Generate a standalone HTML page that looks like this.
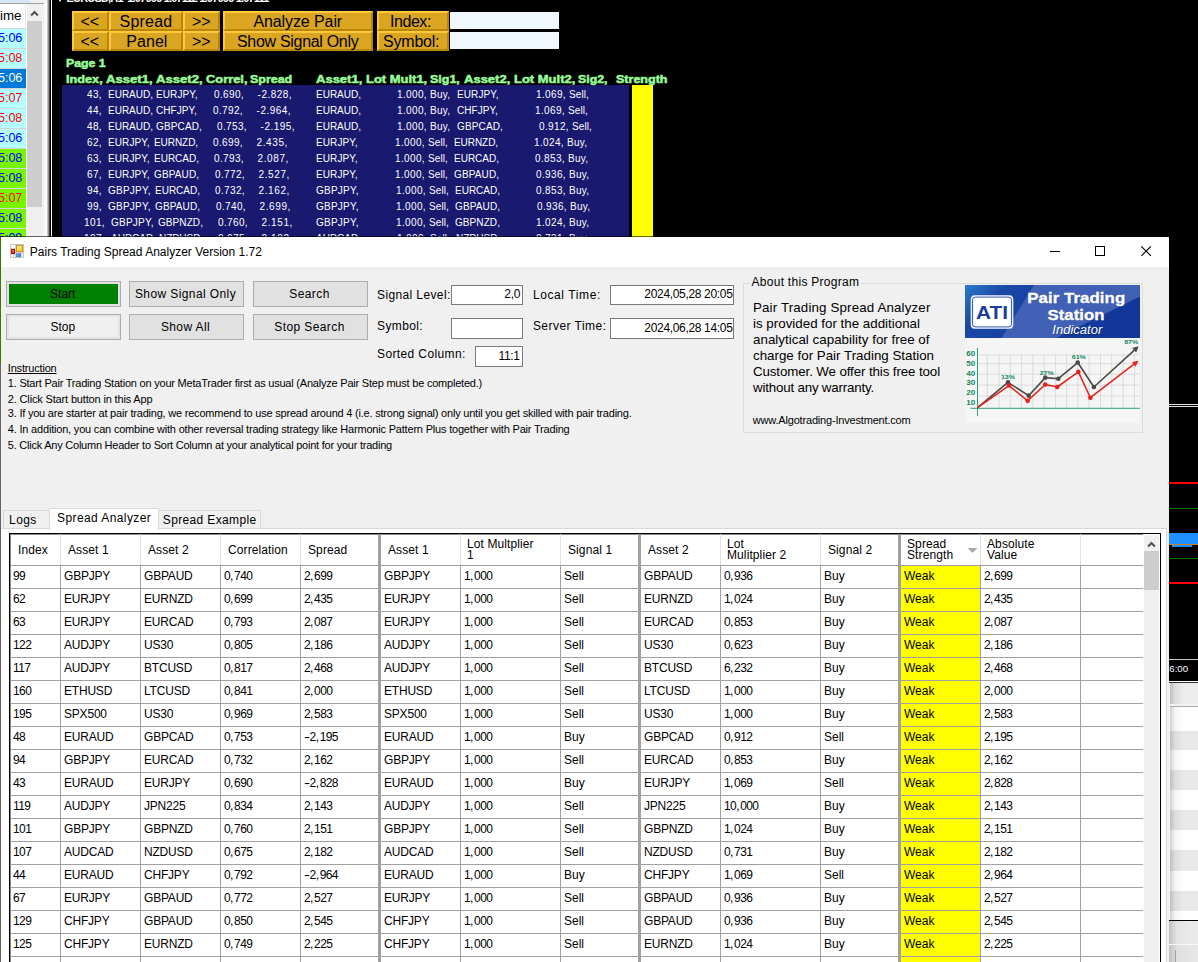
<!DOCTYPE html><html><head><meta charset="utf-8"><title>Pairs Trading Spread Analyzer</title><style>
*{margin:0;padding:0;box-sizing:border-box}
html,body{width:1198px;height:962px;overflow:hidden;background:#000}
body{position:relative;font-family:"Liberation Sans",sans-serif;font-size:12px;color:#000}
div{position:absolute}
.t{white-space:pre}
.a10{font-size:10px;color:#fff}
.hd{font-size:10px;font-weight:bold;color:#98fb98;-webkit-text-stroke:0.45px #98fb98;letter-spacing:0.55px}
.gb{background:#daa520;border-top:2px solid #ffc83d;border-left:2px solid #ffc83d;border-bottom:2px solid #b8860b;border-right:2px solid #b8860b}
.tm{font-size:13.33px}
.wb{background:#e1e1e1;border:1px solid #adadad;text-align:center;line-height:24px;font-size:12px;letter-spacing:0.4px;padding-right:2px}
.g{letter-spacing:0.38px;transform:scaleY(1.06);transform-origin:0 70%}
.sy{transform:scaleY(1.06);transform-origin:0 70%}
.num{letter-spacing:-0.6px}
.cm{padding-right:1.3px}
.mn{display:inline-block;transform:scaleX(1.5);transform-origin:0 50%;margin-right:2.2px}
.wb span{display:block;transform:scaleY(1.06);transform-origin:50% 62%}
.cap{letter-spacing:-0.2px}
.in{background:#fff;border:1px solid #7a7a7a;text-align:right;font-size:12px;letter-spacing:-0.33px}
.ins{font-size:11px}
.ab{font-size:13.33px}
.th{font-size:12px;letter-spacing:0.1px;transform:scaleY(1.06);transform-origin:0 70%}
.td{font-size:12px;transform:scaleY(1.06);transform-origin:0 70%}
</style></head><body>
<div id="left" style="left:0;top:0;width:52px;height:240px;overflow:hidden">
<div style="left:0px;top:0px;width:30px;height:3px;background:#d5e5f5"></div>
<div style="left:30px;top:0px;width:17px;height:3px;background:#f0f0f0"></div>
<div style="left:0px;top:3px;width:44px;height:1px;background:#a0a0a0"></div>
<div style="left:0px;top:4px;width:27px;height:24px;background:#fff"></div>
<div style="left:25px;top:4px;width:1px;height:24px;background:#e8e8e8"></div>
<div class="t tm" style="left:0px;top:8.0px;line-height:16px;">ime</div>
<div style="left:0px;top:28px;width:26px;height:20px;background:#b4ffff;border-top:1px solid #d4d4d4;overflow:hidden"><div class="t" style="right:4.3px;top:0px;line-height:18px;font-size:12.6px;color:#0000ff;letter-spacing:-0.45px">5<span style="margin:0 0.5px 0 0.4px">:</span>06</div></div>
<div style="left:0px;top:48px;width:26px;height:20px;background:#b4ffff;border-top:1px solid #d4d4d4;overflow:hidden"><div class="t" style="right:4.3px;top:0px;line-height:18px;font-size:12.6px;color:#ff0000;letter-spacing:-0.45px">5<span style="margin:0 0.5px 0 0.4px">:</span>08</div></div>
<div style="left:0px;top:68px;width:26px;height:20px;background:#0078d7;border-top:1px solid #d4d4d4;overflow:hidden"><div class="t" style="right:4.3px;top:0px;line-height:18px;font-size:12.6px;color:#ffffff;letter-spacing:-0.45px">5<span style="margin:0 0.5px 0 0.4px">:</span>06</div></div>
<div style="left:0px;top:88px;width:26px;height:20px;background:#b4ffff;border-top:1px solid #d4d4d4;overflow:hidden"><div class="t" style="right:4.3px;top:0px;line-height:18px;font-size:12.6px;color:#ff0000;letter-spacing:-0.45px">5<span style="margin:0 0.5px 0 0.4px">:</span>07</div></div>
<div style="left:0px;top:108px;width:26px;height:20px;background:#b4ffff;border-top:1px solid #d4d4d4;overflow:hidden"><div class="t" style="right:4.3px;top:0px;line-height:18px;font-size:12.6px;color:#ff0000;letter-spacing:-0.45px">5<span style="margin:0 0.5px 0 0.4px">:</span>08</div></div>
<div style="left:0px;top:128px;width:26px;height:20px;background:#b4ffff;border-top:1px solid #d4d4d4;overflow:hidden"><div class="t" style="right:4.3px;top:0px;line-height:18px;font-size:12.6px;color:#0000ff;letter-spacing:-0.45px">5<span style="margin:0 0.5px 0 0.4px">:</span>06</div></div>
<div style="left:0px;top:148px;width:26px;height:20px;background:#78f400;border-top:1px solid #d4d4d4;overflow:hidden"><div class="t" style="right:4.3px;top:0px;line-height:18px;font-size:12.6px;color:#0000ff;letter-spacing:-0.45px">5<span style="margin:0 0.5px 0 0.4px">:</span>08</div></div>
<div style="left:0px;top:168px;width:26px;height:20px;background:#78f400;border-top:1px solid #d4d4d4;overflow:hidden"><div class="t" style="right:4.3px;top:0px;line-height:18px;font-size:12.6px;color:#0000ff;letter-spacing:-0.45px">5<span style="margin:0 0.5px 0 0.4px">:</span>08</div></div>
<div style="left:0px;top:188px;width:26px;height:20px;background:#78f400;border-top:1px solid #d4d4d4;overflow:hidden"><div class="t" style="right:4.3px;top:0px;line-height:18px;font-size:12.6px;color:#ff0000;letter-spacing:-0.45px">5<span style="margin:0 0.5px 0 0.4px">:</span>07</div></div>
<div style="left:0px;top:208px;width:26px;height:20px;background:#78f400;border-top:1px solid #d4d4d4;overflow:hidden"><div class="t" style="right:4.3px;top:0px;line-height:18px;font-size:12.6px;color:#0000ff;letter-spacing:-0.45px">5<span style="margin:0 0.5px 0 0.4px">:</span>08</div></div>
<div style="left:0px;top:228px;width:26px;height:20px;background:#78f400;border-top:1px solid #d4d4d4;overflow:hidden"><div class="t" style="right:4.3px;top:0px;line-height:18px;font-size:12.6px;color:#0000ff;letter-spacing:-0.45px">5<span style="margin:0 0.5px 0 0.4px">:</span>09</div></div>
<div style="left:26px;top:4px;width:1px;height:236px;background:#fff"></div>
<div style="left:27px;top:4px;width:17px;height:236px;background:#f0f0f0"></div>
<svg style="position:absolute;left:30px;top:9px" width="9" height="8" viewBox="0 0 9 8"><path d="M1.1 6.6 L4.5 3.1 L7.9 6.6" fill="none" stroke="#555" stroke-width="2.1"/></svg>
<div style="left:27px;top:21px;width:15px;height:186px;background:#cdcdcd"></div>
<div style="left:44px;top:3px;width:3px;height:237px;background:#fafafa"></div>
<div style="left:47px;top:0px;width:3px;height:240px;background:linear-gradient(90deg,#e0e0e0,#808080 60%,#202020)"></div>
<div style="left:50px;top:0px;width:1px;height:240px;background:#000"></div>
<div style="left:51px;top:0px;width:1px;height:240px;background:#fff"></div>
</div>
<div class="t" style="left:66.50px;top:-8.4px;line-height:12px;font-size:11px;font-weight:bold;color:#fff;letter-spacing:-0.811px;">EURUSD,H1  1.07096 1.07112 1.07096 1.07111</div>
<svg style="position:absolute;left:57px;top:-3.5px" width="6" height="5" viewBox="0 0 6 5"><path d="M0 0 H6 L3 5 Z" fill="#fff"/></svg>
<div class="gb" style="left:72px;top:11px;width:37px;height:20px;"></div>
<div class="t" style="left:80.50px;top:12.899999999999999px;line-height:18px;font-size:16px;letter-spacing:-0.044px;">&lt;&lt;</div>
<div class="gb" style="left:109px;top:11px;width:74px;height:20px;"></div>
<div class="t" style="left:119.60px;top:12.899999999999999px;line-height:18px;font-size:16px;letter-spacing:0.184px;">Spread</div>
<div class="gb" style="left:183px;top:11px;width:37px;height:20px;"></div>
<div class="t" style="left:192.00px;top:12.899999999999999px;line-height:18px;font-size:16px;letter-spacing:-0.144px;">&gt;&gt;</div>
<div class="gb" style="left:72px;top:31px;width:37px;height:20px;"></div>
<div class="t" style="left:80.50px;top:32.9px;line-height:18px;font-size:16px;letter-spacing:-0.044px;">&lt;&lt;</div>
<div class="gb" style="left:109px;top:31px;width:74px;height:20px;"></div>
<div class="t" style="left:126.20px;top:32.9px;line-height:18px;font-size:16px;letter-spacing:0.076px;">Panel</div>
<div class="gb" style="left:183px;top:31px;width:37px;height:20px;"></div>
<div class="t" style="left:192.00px;top:32.9px;line-height:18px;font-size:16px;letter-spacing:-0.144px;">&gt;&gt;</div>
<div class="gb" style="left:223px;top:11px;width:150px;height:20px;"></div>
<div class="t" style="left:253.40px;top:12.899999999999999px;line-height:18px;font-size:16px;letter-spacing:-0.094px;">Analyze Pair</div>
<div class="gb" style="left:223px;top:31px;width:150px;height:20px;"></div>
<div class="t" style="left:237.00px;top:32.9px;line-height:18px;font-size:16px;letter-spacing:-0.306px;">Show Signal Only</div>
<div class="gb" style="left:377px;top:11px;width:72px;height:20px;"></div>
<div class="t" style="left:389.90px;top:12.899999999999999px;line-height:18px;font-size:16px;letter-spacing:-0.416px;">Index:</div>
<div class="gb" style="left:377px;top:31px;width:72px;height:20px;"></div>
<div class="t" style="left:383.10px;top:32.9px;line-height:18px;font-size:16px;letter-spacing:-0.228px;">Symbol:</div>
<div style="left:450px;top:12px;width:109px;height:17px;background:#f0f8ff"></div>
<div style="left:450px;top:32px;width:109px;height:17px;background:#f0f8ff"></div>
<div style="left:62px;top:85px;width:567px;height:155px;background:#191970"></div>
<div style="left:632px;top:85px;width:21px;height:155px;background:#ffff00"></div>
<div class="t" style="left:65.80px;top:56.0px;line-height:14px;font-size:10.67px;font-weight:bold;color:#98fb98;-webkit-text-stroke:0.5px #98fb98;transform-origin:0 50%;transform:scaleX(1.1554);">Page 1</div>
<div class="t" style="left:65.80px;top:71.5px;line-height:14px;font-size:10.67px;font-weight:bold;color:#98fb98;-webkit-text-stroke:0.5px #98fb98;transform-origin:0 50%;transform:scaleX(1.1917);">Index,</div>
<div class="t" style="left:105.80px;top:71.5px;line-height:14px;font-size:10.67px;font-weight:bold;color:#98fb98;-webkit-text-stroke:0.5px #98fb98;transform-origin:0 50%;transform:scaleX(1.2288);">Asset1,</div>
<div class="t" style="left:155.90px;top:71.5px;line-height:14px;font-size:10.67px;font-weight:bold;color:#98fb98;-webkit-text-stroke:0.5px #98fb98;transform-origin:0 50%;transform:scaleX(1.2288);">Asset2,</div>
<div class="t" style="left:205.50px;top:71.5px;line-height:14px;font-size:10.67px;font-weight:bold;color:#98fb98;-webkit-text-stroke:0.5px #98fb98;transform-origin:0 50%;transform:scaleX(1.2078);">Correl,</div>
<div class="t" style="left:250.30px;top:71.5px;line-height:14px;font-size:10.67px;font-weight:bold;color:#98fb98;-webkit-text-stroke:0.5px #98fb98;transform-origin:0 50%;transform:scaleX(1.1677);">Spread</div>
<div class="t" style="left:316.00px;top:71.5px;line-height:14px;font-size:10.67px;font-weight:bold;color:#98fb98;-webkit-text-stroke:0.5px #98fb98;transform-origin:0 50%;transform:scaleX(1.2209);">Asset1,</div>
<div class="t" style="left:365.50px;top:71.5px;line-height:14px;font-size:10.67px;font-weight:bold;color:#98fb98;-webkit-text-stroke:0.5px #98fb98;transform-origin:0 50%;transform:scaleX(1.2164);">Lot Mult1,</div>
<div class="t" style="left:430.20px;top:71.5px;line-height:14px;font-size:10.67px;font-weight:bold;color:#98fb98;-webkit-text-stroke:0.5px #98fb98;transform-origin:0 50%;transform:scaleX(1.1701);">Sig1,</div>
<div class="t" style="left:463.50px;top:71.5px;line-height:14px;font-size:10.67px;font-weight:bold;color:#98fb98;-webkit-text-stroke:0.5px #98fb98;transform-origin:0 50%;transform:scaleX(1.2209);">Asset2,</div>
<div class="t" style="left:513.50px;top:71.5px;line-height:14px;font-size:10.67px;font-weight:bold;color:#98fb98;-webkit-text-stroke:0.5px #98fb98;transform-origin:0 50%;transform:scaleX(1.2184);">Lot Mult2,</div>
<div class="t" style="left:578.00px;top:71.5px;line-height:14px;font-size:10.67px;font-weight:bold;color:#98fb98;-webkit-text-stroke:0.5px #98fb98;transform-origin:0 50%;transform:scaleX(1.1583);">Sig2,</div>
<div class="t" style="left:616.00px;top:71.5px;line-height:14px;font-size:10.67px;font-weight:bold;color:#98fb98;-webkit-text-stroke:0.5px #98fb98;transform-origin:0 50%;transform:scaleX(1.1755);">Strength</div>
<div class="t a10" style="left:87px;top:87.5px;line-height:14px;letter-spacing:0.367px">43,</div>
<div class="t a10" style="left:108px;top:87.5px;line-height:14px;letter-spacing:0.000px">EURAUD,</div>
<div class="t a10" style="left:156px;top:87.5px;line-height:14px;letter-spacing:0.110px">EURJPY,</div>
<div class="t a10" style="left:214px;top:87.5px;line-height:14px;letter-spacing:0.367px">0.690,</div>
<div class="t a10" style="left:257.6px;top:87.5px;line-height:14px;letter-spacing:0.487px">-2.828,</div>
<div class="t a10" style="left:316px;top:87.5px;line-height:14px;letter-spacing:0.000px">EURAUD,</div>
<div class="t a10" style="left:397px;top:87.5px;line-height:14px;letter-spacing:0.367px">1.000,</div>
<div class="t a10" style="left:430px;top:87.5px;line-height:14px;letter-spacing:0.247px">Buy,</div>
<div class="t a10" style="left:457px;top:87.5px;line-height:14px;letter-spacing:0.110px">EURJPY,</div>
<div class="t a10" style="left:536px;top:87.5px;line-height:14px;letter-spacing:0.367px">1.069,</div>
<div class="t a10" style="left:569px;top:87.5px;line-height:14px;letter-spacing:0.110px">Sell,</div>
<div class="t a10" style="left:87px;top:103.5px;line-height:14px;letter-spacing:0.367px">44,</div>
<div class="t a10" style="left:108px;top:103.5px;line-height:14px;letter-spacing:0.000px">EURAUD,</div>
<div class="t a10" style="left:156px;top:103.5px;line-height:14px;letter-spacing:0.047px">CHFJPY,</div>
<div class="t a10" style="left:213px;top:103.5px;line-height:14px;letter-spacing:0.367px">0.792,</div>
<div class="t a10" style="left:256.6px;top:103.5px;line-height:14px;letter-spacing:0.487px">-2.964,</div>
<div class="t a10" style="left:316px;top:103.5px;line-height:14px;letter-spacing:0.000px">EURAUD,</div>
<div class="t a10" style="left:397px;top:103.5px;line-height:14px;letter-spacing:0.367px">1.000,</div>
<div class="t a10" style="left:430px;top:103.5px;line-height:14px;letter-spacing:0.247px">Buy,</div>
<div class="t a10" style="left:457px;top:103.5px;line-height:14px;letter-spacing:0.047px">CHFJPY,</div>
<div class="t a10" style="left:535px;top:103.5px;line-height:14px;letter-spacing:0.367px">1.069,</div>
<div class="t a10" style="left:568px;top:103.5px;line-height:14px;letter-spacing:0.110px">Sell,</div>
<div class="t a10" style="left:87px;top:119.5px;line-height:14px;letter-spacing:0.367px">48,</div>
<div class="t a10" style="left:108px;top:119.5px;line-height:14px;letter-spacing:0.000px">EURAUD,</div>
<div class="t a10" style="left:156px;top:119.5px;line-height:14px;letter-spacing:0.141px">GBPCAD,</div>
<div class="t a10" style="left:217px;top:119.5px;line-height:14px;letter-spacing:0.367px">0.753,</div>
<div class="t a10" style="left:260.6px;top:119.5px;line-height:14px;letter-spacing:0.487px">-2.195,</div>
<div class="t a10" style="left:316px;top:119.5px;line-height:14px;letter-spacing:0.000px">EURAUD,</div>
<div class="t a10" style="left:397px;top:119.5px;line-height:14px;letter-spacing:0.367px">1.000,</div>
<div class="t a10" style="left:430px;top:119.5px;line-height:14px;letter-spacing:0.247px">Buy,</div>
<div class="t a10" style="left:457px;top:119.5px;line-height:14px;letter-spacing:0.141px">GBPCAD,</div>
<div class="t a10" style="left:539px;top:119.5px;line-height:14px;letter-spacing:0.367px">0.912,</div>
<div class="t a10" style="left:572px;top:119.5px;line-height:14px;letter-spacing:0.110px">Sell,</div>
<div class="t a10" style="left:87px;top:135.5px;line-height:14px;letter-spacing:0.367px">62,</div>
<div class="t a10" style="left:108px;top:135.5px;line-height:14px;letter-spacing:0.110px">EURJPY,</div>
<div class="t a10" style="left:154px;top:135.5px;line-height:14px;letter-spacing:-0.063px">EURNZD,</div>
<div class="t a10" style="left:213px;top:135.5px;line-height:14px;letter-spacing:0.367px">0.699,</div>
<div class="t a10" style="left:256.6px;top:135.5px;line-height:14px;letter-spacing:0.587px">2.435,</div>
<div class="t a10" style="left:316px;top:135.5px;line-height:14px;letter-spacing:0.110px">EURJPY,</div>
<div class="t a10" style="left:395px;top:135.5px;line-height:14px;letter-spacing:0.367px">1.000,</div>
<div class="t a10" style="left:428px;top:135.5px;line-height:14px;letter-spacing:0.110px">Sell,</div>
<div class="t a10" style="left:454px;top:135.5px;line-height:14px;letter-spacing:-0.063px">EURNZD,</div>
<div class="t a10" style="left:534px;top:135.5px;line-height:14px;letter-spacing:0.367px">1.024,</div>
<div class="t a10" style="left:567px;top:135.5px;line-height:14px;letter-spacing:0.247px">Buy,</div>
<div class="t a10" style="left:87px;top:151.5px;line-height:14px;letter-spacing:0.367px">63,</div>
<div class="t a10" style="left:108px;top:151.5px;line-height:14px;letter-spacing:0.110px">EURJPY,</div>
<div class="t a10" style="left:154px;top:151.5px;line-height:14px;letter-spacing:0.000px">EURCAD,</div>
<div class="t a10" style="left:214px;top:151.5px;line-height:14px;letter-spacing:0.367px">0.793,</div>
<div class="t a10" style="left:257.6px;top:151.5px;line-height:14px;letter-spacing:0.587px">2.087,</div>
<div class="t a10" style="left:316px;top:151.5px;line-height:14px;letter-spacing:0.110px">EURJPY,</div>
<div class="t a10" style="left:395px;top:151.5px;line-height:14px;letter-spacing:0.367px">1.000,</div>
<div class="t a10" style="left:428px;top:151.5px;line-height:14px;letter-spacing:0.110px">Sell,</div>
<div class="t a10" style="left:454px;top:151.5px;line-height:14px;letter-spacing:0.000px">EURCAD,</div>
<div class="t a10" style="left:535px;top:151.5px;line-height:14px;letter-spacing:0.367px">0.853,</div>
<div class="t a10" style="left:568px;top:151.5px;line-height:14px;letter-spacing:0.247px">Buy,</div>
<div class="t a10" style="left:87px;top:167.5px;line-height:14px;letter-spacing:0.367px">67,</div>
<div class="t a10" style="left:108px;top:167.5px;line-height:14px;letter-spacing:0.110px">EURJPY,</div>
<div class="t a10" style="left:154px;top:167.5px;line-height:14px;letter-spacing:0.141px">GBPAUD,</div>
<div class="t a10" style="left:215px;top:167.5px;line-height:14px;letter-spacing:0.367px">0.772,</div>
<div class="t a10" style="left:258.6px;top:167.5px;line-height:14px;letter-spacing:0.587px">2.527,</div>
<div class="t a10" style="left:316px;top:167.5px;line-height:14px;letter-spacing:0.110px">EURJPY,</div>
<div class="t a10" style="left:395px;top:167.5px;line-height:14px;letter-spacing:0.367px">1.000,</div>
<div class="t a10" style="left:428px;top:167.5px;line-height:14px;letter-spacing:0.110px">Sell,</div>
<div class="t a10" style="left:454px;top:167.5px;line-height:14px;letter-spacing:0.141px">GBPAUD,</div>
<div class="t a10" style="left:536px;top:167.5px;line-height:14px;letter-spacing:0.367px">0.936,</div>
<div class="t a10" style="left:569px;top:167.5px;line-height:14px;letter-spacing:0.247px">Buy,</div>
<div class="t a10" style="left:87px;top:183.5px;line-height:14px;letter-spacing:0.367px">94,</div>
<div class="t a10" style="left:108px;top:183.5px;line-height:14px;letter-spacing:0.251px">GBPJPY,</div>
<div class="t a10" style="left:155px;top:183.5px;line-height:14px;letter-spacing:0.000px">EURCAD,</div>
<div class="t a10" style="left:215px;top:183.5px;line-height:14px;letter-spacing:0.367px">0.732,</div>
<div class="t a10" style="left:258.6px;top:183.5px;line-height:14px;letter-spacing:0.587px">2.162,</div>
<div class="t a10" style="left:316px;top:183.5px;line-height:14px;letter-spacing:0.251px">GBPJPY,</div>
<div class="t a10" style="left:396px;top:183.5px;line-height:14px;letter-spacing:0.367px">1.000,</div>
<div class="t a10" style="left:429px;top:183.5px;line-height:14px;letter-spacing:0.110px">Sell,</div>
<div class="t a10" style="left:455px;top:183.5px;line-height:14px;letter-spacing:0.000px">EURCAD,</div>
<div class="t a10" style="left:536px;top:183.5px;line-height:14px;letter-spacing:0.367px">0.853,</div>
<div class="t a10" style="left:569px;top:183.5px;line-height:14px;letter-spacing:0.247px">Buy,</div>
<div class="t a10" style="left:87px;top:199.5px;line-height:14px;letter-spacing:0.367px">99,</div>
<div class="t a10" style="left:108px;top:199.5px;line-height:14px;letter-spacing:0.251px">GBPJPY,</div>
<div class="t a10" style="left:155px;top:199.5px;line-height:14px;letter-spacing:0.141px">GBPAUD,</div>
<div class="t a10" style="left:216px;top:199.5px;line-height:14px;letter-spacing:0.367px">0.740,</div>
<div class="t a10" style="left:259.6px;top:199.5px;line-height:14px;letter-spacing:0.587px">2.699,</div>
<div class="t a10" style="left:316px;top:199.5px;line-height:14px;letter-spacing:0.251px">GBPJPY,</div>
<div class="t a10" style="left:396px;top:199.5px;line-height:14px;letter-spacing:0.367px">1.000,</div>
<div class="t a10" style="left:429px;top:199.5px;line-height:14px;letter-spacing:0.110px">Sell,</div>
<div class="t a10" style="left:455px;top:199.5px;line-height:14px;letter-spacing:0.141px">GBPAUD,</div>
<div class="t a10" style="left:537px;top:199.5px;line-height:14px;letter-spacing:0.367px">0.936,</div>
<div class="t a10" style="left:570px;top:199.5px;line-height:14px;letter-spacing:0.247px">Buy,</div>
<div class="t a10" style="left:84px;top:215.5px;line-height:14px;letter-spacing:0.385px">101,</div>
<div class="t a10" style="left:111px;top:215.5px;line-height:14px;letter-spacing:0.251px">GBPJPY,</div>
<div class="t a10" style="left:158px;top:215.5px;line-height:14px;letter-spacing:0.079px">GBPNZD,</div>
<div class="t a10" style="left:218px;top:215.5px;line-height:14px;letter-spacing:0.367px">0.760,</div>
<div class="t a10" style="left:261.6px;top:215.5px;line-height:14px;letter-spacing:0.587px">2.151,</div>
<div class="t a10" style="left:316px;top:215.5px;line-height:14px;letter-spacing:0.251px">GBPJPY,</div>
<div class="t a10" style="left:396px;top:215.5px;line-height:14px;letter-spacing:0.367px">1.000,</div>
<div class="t a10" style="left:429px;top:215.5px;line-height:14px;letter-spacing:0.110px">Sell,</div>
<div class="t a10" style="left:455px;top:215.5px;line-height:14px;letter-spacing:0.079px">GBPNZD,</div>
<div class="t a10" style="left:536px;top:215.5px;line-height:14px;letter-spacing:0.367px">1.024,</div>
<div class="t a10" style="left:569px;top:215.5px;line-height:14px;letter-spacing:0.247px">Buy,</div>
<div class="t a10" style="left:84px;top:231.5px;line-height:14px;letter-spacing:0.385px">107,</div>
<div class="t a10" style="left:111px;top:231.5px;line-height:14px;letter-spacing:0.000px">AUDCAD,</div>
<div class="t a10" style="left:159px;top:231.5px;line-height:14px;letter-spacing:-0.063px">NZDUSD,</div>
<div class="t a10" style="left:218px;top:231.5px;line-height:14px;letter-spacing:0.367px">0.675,</div>
<div class="t a10" style="left:261.6px;top:231.5px;line-height:14px;letter-spacing:0.587px">2.182,</div>
<div class="t a10" style="left:316px;top:231.5px;line-height:14px;letter-spacing:0.000px">AUDCAD,</div>
<div class="t a10" style="left:397px;top:231.5px;line-height:14px;letter-spacing:0.367px">1.000,</div>
<div class="t a10" style="left:430px;top:231.5px;line-height:14px;letter-spacing:0.110px">Sell,</div>
<div class="t a10" style="left:456px;top:231.5px;line-height:14px;letter-spacing:-0.063px">NZDUSD,</div>
<div class="t a10" style="left:536px;top:231.5px;line-height:14px;letter-spacing:0.367px">0.731,</div>
<div class="t a10" style="left:569px;top:231.5px;line-height:14px;letter-spacing:0.247px">Buy,</div>
<div style="left:1169px;top:404px;width:29px;height:1px;background:#e0e0e0"></div>
<div style="left:1169px;top:406px;width:29px;height:1px;background:#e0e0e0"></div>
<div style="left:1169px;top:482px;width:29px;height:2px;background:#ff0000"></div>
<div style="left:1169px;top:508px;width:29px;height:1px;background:#007000"></div>
<div style="left:1169px;top:533px;width:29px;height:11px;background:#1e90ff"></div>
<div style="left:1169px;top:544px;width:29px;height:1px;background:#d08020"></div>
<div style="left:1172px;top:545px;width:20px;height:2px;background:#1e90ff"></div>
<div style="left:1169px;top:558px;width:29px;height:1px;background:#007000"></div>
<div style="left:1169px;top:582px;width:29px;height:2px;background:#ff0000"></div>
<div style="left:1169px;top:659px;width:29px;height:1px;background:#c8c8c8"></div>
<div class="t " style="left:1169.3px;top:662.6px;line-height:12px;color:#fff;font-size:9.6px">6:00</div>
<div style="left:1169px;top:681px;width:29px;height:1px;background:#fff"></div>
<div style="left:1169px;top:682px;width:29px;height:1px;background:#303030"></div>
<div style="left:1169px;top:683px;width:29px;height:21px;background:linear-gradient(90deg,#b8b8b8 0,#dcdcdc 6px,#ececec 14px)"></div>
<div style="left:1169px;top:707px;width:29px;height:24px;background:linear-gradient(90deg,#c8c8c8 0,#f4f4f4 6px,#fff 14px)"></div>
<div style="left:1169px;top:731px;width:29px;height:19px;background:linear-gradient(90deg,#b8b8b8 0,#dcdcdc 6px,#e8e8e8 14px)"></div>
<div style="left:1169px;top:750px;width:29px;height:20px;background:linear-gradient(90deg,#c8c8c8 0,#f4f4f4 6px,#fff 14px)"></div>
<div style="left:1169px;top:770px;width:29px;height:20px;background:linear-gradient(90deg,#b8b8b8 0,#dcdcdc 6px,#e8e8e8 14px)"></div>
<div style="left:1169px;top:790px;width:29px;height:20px;background:linear-gradient(90deg,#c8c8c8 0,#f4f4f4 6px,#fff 14px)"></div>
<div style="left:1169px;top:810px;width:29px;height:20px;background:linear-gradient(90deg,#b8b8b8 0,#dcdcdc 6px,#e8e8e8 14px)"></div>
<div style="left:1169px;top:830px;width:29px;height:20px;background:linear-gradient(90deg,#c8c8c8 0,#f4f4f4 6px,#fff 14px)"></div>
<div style="left:1169px;top:850px;width:29px;height:21px;background:linear-gradient(90deg,#b8b8b8 0,#dcdcdc 6px,#e8e8e8 14px)"></div>
<div style="left:1169px;top:871px;width:29px;height:20px;background:linear-gradient(90deg,#c8c8c8 0,#f4f4f4 6px,#fff 14px)"></div>
<div style="left:1169px;top:891px;width:29px;height:20px;background:linear-gradient(90deg,#b8b8b8 0,#dcdcdc 6px,#e8e8e8 14px)"></div>
<div style="left:1169px;top:911px;width:29px;height:9px;background:linear-gradient(90deg,#c8c8c8 0,#f4f4f4 6px,#fff 14px)"></div>
<div style="left:1169px;top:704px;width:29px;height:2px;background:#f2f2f2"></div>
<div style="left:1169px;top:706px;width:29px;height:1px;background:#a8a8a8"></div>
<div style="left:1169px;top:920px;width:29px;height:1px;background:#000"></div>
<div style="left:1169px;top:921px;width:29px;height:23px;background:linear-gradient(90deg,#c0c0c0 0,#e4e4e4 8px,#ececec)"></div>
<div style="left:1169px;top:944px;width:29px;height:1px;background:#f8f8f8"></div>
<div style="left:1169px;top:945px;width:29px;height:17px;background:linear-gradient(90deg,#c0c0c0 0,#e0e0e0 8px,#e8e8e8)"></div>
<div style="left:1175px;top:950px;width:1px;height:12px;background:#a0a0a0"></div>
<div style="left:1169px;top:683px;width:1px;height:237px;background:#f4f4f4"></div>
<div style="left:0px;top:236px;width:1169px;height:1px;background:rgba(0,0,0,0.6)"></div>
<div style="left:0px;top:237px;width:1px;height:127px;background:#3a7800"></div>
<div style="left:0px;top:364px;width:1px;height:598px;background:#646464"></div>
<div id="win" style="left:1px;top:237px;width:1168px;height:725px;background:#f0f0f0"></div>
<div style="left:1px;top:237px;width:1168px;height:30px;background:#fff"></div>
<svg style="position:absolute;left:10px;top:244px" width="14" height="14" viewBox="0 0 14 14">
<defs><linearGradient id="iy" x1="0" y1="0" x2="0.6" y2="1"><stop offset="0" stop-color="#fff4c0"/><stop offset="1" stop-color="#ffc61a"/></linearGradient>
<linearGradient id="ir" x1="0" y1="0" x2="0" y2="1"><stop offset="0" stop-color="#f8a0a0"/><stop offset="1" stop-color="#d01808"/></linearGradient>
<linearGradient id="ib" x1="0" y1="0" x2="0.8" y2="1"><stop offset="0" stop-color="#a8c4ff"/><stop offset="1" stop-color="#2f62d0"/></linearGradient></defs>
<rect x="0.5" y="0.5" width="13" height="13" fill="#fff" stroke="#c6c6c6"/>
<path d="M5.5 1 V13 M1 4.5 H5.5 M1 10.5 H5.5 M3.5 10.5 V13 M5.5 8.5 H13 M11.5 8.5 V13" stroke="#d0d0d0" stroke-width="1" fill="none"/>
<rect x="6.5" y="1.5" width="6" height="6" fill="url(#iy)" stroke="#c8980c"/>
<rect x="1.5" y="5.5" width="3" height="4" fill="url(#ir)" stroke="#a81000"/>
<rect x="6.3" y="9.3" width="4.4" height="3.4" fill="url(#ib)" stroke="#4a78d8" stroke-width="0.6"/></svg>
<div class="t" style="left:29.80px;top:243.5px;line-height:16px;font-size:12px;letter-spacing:-0.003px;">Pairs Trading Spread Analyzer Version 1.72</div>
<svg style="position:absolute;left:1040px;top:240px" width="120" height="24" viewBox="0 0 120 24">
<path d="M10 11.5 H20" stroke="#000" stroke-width="1"/>
<rect x="55.5" y="6.5" width="9" height="9" fill="none" stroke="#000" stroke-width="1"/>
<path d="M101.3 6.3 L110.9 15.9 M110.9 6.3 L101.3 15.9" stroke="#000" stroke-width="1.1"/></svg>
<div class="wb" style="left:6px;top:281px;width:115px;height:26px;"><div style="left:2px;top:2px;right:2px;bottom:2px;background:#008000;line-height:20px;padding-right:1.5px"><span style="letter-spacing:0">Start</span></div></div>
<div class="wb" style="left:6px;top:314px;width:115px;height:26px;background:#f0f0f0"><div style="left:0;top:0;right:0;bottom:0;border:2px solid #e4e4e4;line-height:20px;padding-right:1.5px"><span style="letter-spacing:0">Stop</span></div></div>
<div class="wb" style="left:129px;top:281px;width:115px;height:26px;"><span>Show Signal Only</span></div>
<div class="wb" style="left:129px;top:314px;width:115px;height:26px;"><span>Show All</span></div>
<div class="wb" style="left:253px;top:281px;width:115px;height:26px;"><span>Search</span></div>
<div class="wb" style="left:253px;top:314px;width:115px;height:26px;"><span>Stop Search</span></div>
<div class="t g" style="left:377px;top:287.0px;line-height:16px;">Signal Level:</div>
<div class="t g" style="left:377px;top:318.0px;line-height:16px;">Symbol:</div>
<div class="t g" style="left:377px;top:346.0px;line-height:16px;">Sorted Column:</div>
<div class="in" style="left:451px;top:285px;width:72px;height:20px;line-height:17px;padding-right:2px">2,0</div>
<div class="in" style="left:451px;top:318px;width:72px;height:21px;"></div>
<div class="in" style="left:475px;top:346px;width:48px;height:21px;line-height:18px;padding-right:2.4px">11:1</div>
<div class="t" style="left:532.90px;top:287.0px;line-height:16px;font-size:12px;letter-spacing:0.604px;transform:scaleY(1.06);transform-origin:0 70%">Local Time:</div>
<div class="t" style="left:532.90px;top:318.0px;line-height:16px;font-size:12px;letter-spacing:0.465px;transform:scaleY(1.06);transform-origin:0 70%">Server Time:</div>
<div class="in" style="left:610px;top:285px;width:124px;height:20px;line-height:17px;padding-right:0.5px">2024,05,28 20:05</div>
<div class="in" style="left:610px;top:318px;width:124px;height:21px;line-height:18px;padding-right:0.5px">2024,06,28 14:05</div>
<div class="t" style="left:7.80px;top:360.5px;line-height:14px;font-size:11px;text-decoration:underline;letter-spacing:-0.186px;">Instruction</div>
<div class="t" style="left:7.80px;top:375.5px;line-height:14px;font-size:11px;letter-spacing:-0.214px;">1. Start Pair Trading Station on your MetaTrader first as usual (Analyze Pair Step must be completed.)</div>
<div class="t" style="left:7.80px;top:391.8px;line-height:14px;font-size:11px;letter-spacing:-0.155px;">2. Click Start button in this App</div>
<div class="t" style="left:7.80px;top:406.0px;line-height:14px;font-size:11px;letter-spacing:-0.212px;">3. If you are starter at pair trading, we recommend to use spread around 4 (i.e. strong signal) only until you get skilled with pair trading.</div>
<div class="t" style="left:7.80px;top:421.5px;line-height:14px;font-size:11px;letter-spacing:-0.192px;">4. In addition, you can combine with other reversal trading strategy like Harmonic Pattern Plus together with Pair Trading</div>
<div class="t" style="left:7.80px;top:437.5px;line-height:14px;font-size:11px;letter-spacing:-0.233px;">5. Click Any Column Header to Sort Column at your analytical point for your trading</div>
<div style="left:743px;top:283px;width:400px;height:150px;border:1px solid #dcdcdc"></div>
<div class="t g" style="left:749.5px;top:274.5px;line-height:14px;background:#f0f0f0;padding:0 2px;letter-spacing:0.28px">About this Program</div>
<div class="t" style="left:753.00px;top:299.5px;line-height:16px;font-size:13.33px;letter-spacing:0.147px;">Pair Trading Spread Analyzer</div>
<div class="t" style="left:753.00px;top:315.5px;line-height:16px;font-size:13.33px;letter-spacing:0.009px;">is provided for the additional</div>
<div class="t" style="left:753.00px;top:331.5px;line-height:16px;font-size:13.33px;letter-spacing:0.028px;">analytical capability for free of</div>
<div class="t" style="left:753.00px;top:347.5px;line-height:16px;font-size:13.33px;letter-spacing:0.007px;">charge for Pair Trading Station</div>
<div class="t" style="left:753.00px;top:363.5px;line-height:16px;font-size:13.33px;letter-spacing:-0.110px;">Customer. We offer this free tool</div>
<div class="t" style="left:753.00px;top:379.5px;line-height:16px;font-size:13.33px;letter-spacing:-0.188px;">without any warranty.</div>
<div class="t" style="left:752.80px;top:412.6px;line-height:14px;font-size:11px;letter-spacing:-0.184px;">www.Algotrading-Investment.com</div>
<svg style="position:absolute;left:965px;top:285px" width="175" height="138" viewBox="0 0 175 138" font-family="Liberation Sans, sans-serif"><defs><linearGradient id="lg" x1="0" y1="0" x2="1" y2="0.3"><stop offset="0" stop-color="#2d7acc"/><stop offset="0.22" stop-color="#1a48a6"/><stop offset="1" stop-color="#11369a"/></linearGradient></defs><rect width="175" height="138" fill="#f5f5f5"/><rect width="175" height="53" fill="url(#lg)"/><path d="M36.5 53 L69 0 L175 0 L175 11.5 L91 53 Z" fill="#4464b6" opacity="0.92"/><rect x="6" y="10.5" width="42" height="33" rx="3.5" fill="#fff" stroke="#cdd8f0" stroke-width="0.8"/><rect x="7.6" y="12.1" width="38.8" height="29.8" rx="2.5" fill="#fff" stroke="#1c3f9c" stroke-width="0.9"/><text x="27" y="34" font-size="19" font-weight="bold" fill="#1c3f9c" text-anchor="middle" textLength="32" lengthAdjust="spacingAndGlyphs">ATI</text><text x="112.0" y="18.3" font-size="15.5" font-weight="bold" fill="#0a1e60" opacity="0.55"  text-anchor="middle" textLength="98" lengthAdjust="spacingAndGlyphs">Pair Trading</text><text x="111.7" y="35.3" font-size="15.5" font-weight="bold" fill="#0a1e60" opacity="0.55"  text-anchor="middle" textLength="57" lengthAdjust="spacingAndGlyphs">Station</text><text x="113.0" y="49.8" font-size="12.5" font-style="italic" fill="#0a1e60" opacity="0.55" text-anchor="middle" textLength="50" lengthAdjust="spacingAndGlyphs">Indicator</text><text x="111.3" y="17.5" font-size="15.5" font-weight="bold" fill="#fff" opacity="1" stroke="#fff" stroke-width="0.35" text-anchor="middle" textLength="98" lengthAdjust="spacingAndGlyphs">Pair Trading</text><text x="111" y="34.5" font-size="15.5" font-weight="bold" fill="#fff" opacity="1" stroke="#fff" stroke-width="0.35" text-anchor="middle" textLength="57" lengthAdjust="spacingAndGlyphs">Station</text><text x="112.3" y="49" font-size="12.5" font-style="italic" fill="#fff" opacity="1" text-anchor="middle" textLength="50" lengthAdjust="spacingAndGlyphs">Indicator</text><path d="M22.27 69 V123" stroke="#d6d6d6" stroke-width="0.8"/><path d="M34.07 69 V123" stroke="#d6d6d6" stroke-width="0.8"/><path d="M45.25 69 V123" stroke="#d6d6d6" stroke-width="0.8"/><path d="M56.43 69 V123" stroke="#d6d6d6" stroke-width="0.8"/><path d="M67.82 69 V123" stroke="#d6d6d6" stroke-width="0.8"/><path d="M79.2 69 V123" stroke="#d6d6d6" stroke-width="0.8"/><path d="M90.59 69 V123" stroke="#d6d6d6" stroke-width="0.8"/><path d="M101.56 69 V123" stroke="#d6d6d6" stroke-width="0.8"/><path d="M112.95 69 V123" stroke="#d6d6d6" stroke-width="0.8"/><path d="M124.13 69 V123" stroke="#d6d6d6" stroke-width="0.8"/><path d="M135.52 69 V123" stroke="#d6d6d6" stroke-width="0.8"/><path d="M146.7 69 V123" stroke="#d6d6d6" stroke-width="0.8"/><path d="M158.08 69 V123" stroke="#d6d6d6" stroke-width="0.8"/><path d="M169.47 69 V123" stroke="#d6d6d6" stroke-width="0.8"/><path d="M12.5 69.89 H175" stroke="#d6d6d6" stroke-width="0.8"/><path d="M12.5 78.58 H175" stroke="#d6d6d6" stroke-width="0.8"/><path d="M12.5 89.14 H175" stroke="#d6d6d6" stroke-width="0.8"/><path d="M12.5 100.11 H175" stroke="#d6d6d6" stroke-width="0.8"/><path d="M12.5 110.88 H175" stroke="#d6d6d6" stroke-width="0.8"/><path d="M12.5 63 V131" stroke="#2e9e7a" stroke-width="1"/><path d="M5.5 123.3 H175" stroke="#2e9e7a" stroke-width="1"/><text x="5.8" y="70.64" font-size="6.3" font-weight="bold" fill="#0e8a60" text-anchor="middle" textLength="9" lengthAdjust="spacingAndGlyphs">60</text><text x="5.8" y="80.57000000000001" font-size="6.3" font-weight="bold" fill="#0e8a60" text-anchor="middle" textLength="9" lengthAdjust="spacingAndGlyphs">50</text><text x="5.8" y="90.51" font-size="6.3" font-weight="bold" fill="#0e8a60" text-anchor="middle" textLength="9" lengthAdjust="spacingAndGlyphs">40</text><text x="5.8" y="100.45" font-size="6.3" font-weight="bold" fill="#0e8a60" text-anchor="middle" textLength="9" lengthAdjust="spacingAndGlyphs">30</text><text x="5.8" y="110.18" font-size="6.3" font-weight="bold" fill="#0e8a60" text-anchor="middle" textLength="9" lengthAdjust="spacingAndGlyphs">20</text><text x="5.8" y="120.12" font-size="6.3" font-weight="bold" fill="#0e8a60" text-anchor="middle" textLength="9" lengthAdjust="spacingAndGlyphs">10</text><polyline points="12.54,122.68 42.97,97.42 63.67,110.67 80.24,92.66 93.28,93.7 112.74,77.55 128.89,101.98 172.16,62.64" fill="none" stroke="#4c4a44" stroke-width="1.6" stroke-linejoin="round"/><polyline points="12.54,122.68 44.01,100.53 62.64,115.85 80.24,99.49 92.25,101.98 113.36,86.86 125.37,112.74 171.96,76.93" fill="none" stroke="#e0281e" stroke-width="1.6" stroke-linejoin="round"/><circle cx="42.97" cy="97.42" r="2.3" fill="#4c4a44"/><circle cx="63.67" cy="110.67" r="2.3" fill="#4c4a44"/><circle cx="80.24" cy="92.66" r="2.3" fill="#4c4a44"/><circle cx="93.28" cy="93.7" r="2.3" fill="#4c4a44"/><circle cx="112.74" cy="77.55" r="2.3" fill="#4c4a44"/><circle cx="128.89" cy="101.98" r="2.3" fill="#4c4a44"/><circle cx="44.01" cy="100.53" r="2.3" fill="#e8201a"/><circle cx="62.64" cy="115.85" r="2.3" fill="#e8201a"/><circle cx="80.24" cy="99.49" r="2.3" fill="#e8201a"/><circle cx="92.25" cy="101.98" r="2.3" fill="#e8201a"/><circle cx="113.36" cy="86.86" r="2.3" fill="#e8201a"/><circle cx="125.37" cy="112.74" r="2.3" fill="#e8201a"/><polygon points="173.64,61.29 167.18,63.11 171.22,67.55" fill="#4c4a44"/><polygon points="173.55,75.71 166.96,76.99 170.62,81.75" fill="#e0281e"/><text x="42.97" y="93.92999999999999" font-size="6" font-weight="bold" fill="#0e8a60" text-anchor="middle" textLength="14" lengthAdjust="spacingAndGlyphs">13%</text><text x="81.69" y="89.78999999999999" font-size="6" font-weight="bold" fill="#0e8a60" text-anchor="middle" textLength="14" lengthAdjust="spacingAndGlyphs">27%</text><text x="113.78" y="74.05999999999999" font-size="6" font-weight="bold" fill="#0e8a60" text-anchor="middle" textLength="14" lengthAdjust="spacingAndGlyphs">61%</text><text x="166.16" y="59.15" font-size="6" font-weight="bold" fill="#0e8a60" text-anchor="middle" textLength="14" lengthAdjust="spacingAndGlyphs">87%</text></svg>
<div style="left:1px;top:528px;width:1166px;height:434px;background:#fff;border:1px solid #d9d9d9;border-left:1px solid #f6f6f6;border-bottom:none"></div>
<div style="left:3px;top:510px;width:48px;height:19px;background:#f0f0f0;border:1px solid #d9d9d9;"></div>
<div style="left:158px;top:510px;width:103px;height:19px;background:#f0f0f0;border:1px solid #d9d9d9;border-left:none"></div>
<div style="left:49px;top:508px;width:110px;height:22px;background:#fff;border:1px solid #d9d9d9;border-bottom:none"></div>
<div class="t" style="left:9.10px;top:511.5px;line-height:16px;font-size:12px;letter-spacing:0.392px;transform:scaleY(1.06);transform-origin:0 70%">Logs</div>
<div class="t" style="left:57.00px;top:509.5px;line-height:16px;font-size:12px;letter-spacing:0.409px;transform:scaleY(1.06);transform-origin:0 70%">Spread Analyzer</div>
<div class="t" style="left:162.80px;top:511.5px;line-height:16px;font-size:12px;letter-spacing:0.356px;transform:scaleY(1.06);transform-origin:0 70%">Spread Example</div>
<div style="left:9px;top:533px;width:1152px;height:429px;background:#fff;border:1px solid #000;border-bottom:none"></div>
<div style="left:10px;top:534px;width:1133px;height:1px;background:#8c8c8c"></div>
<div style="left:10px;top:534px;width:1px;height:428px;background:#8c8c8c"></div>
<div style="left:901px;top:566px;width:79px;height:396px;background:#ffff00"></div>
<div style="left:60px;top:534px;width:1px;height:31px;background:#e2e2e2"></div>
<div style="left:60px;top:565px;width:1px;height:397px;background:#a0a0a0"></div>
<div style="left:140px;top:534px;width:1px;height:31px;background:#e2e2e2"></div>
<div style="left:140px;top:565px;width:1px;height:397px;background:#a0a0a0"></div>
<div style="left:220px;top:534px;width:1px;height:31px;background:#e2e2e2"></div>
<div style="left:220px;top:565px;width:1px;height:397px;background:#a0a0a0"></div>
<div style="left:300px;top:534px;width:1px;height:31px;background:#e2e2e2"></div>
<div style="left:300px;top:565px;width:1px;height:397px;background:#a0a0a0"></div>
<div style="left:460px;top:534px;width:1px;height:31px;background:#e2e2e2"></div>
<div style="left:460px;top:565px;width:1px;height:397px;background:#a0a0a0"></div>
<div style="left:560px;top:534px;width:1px;height:31px;background:#e2e2e2"></div>
<div style="left:560px;top:565px;width:1px;height:397px;background:#a0a0a0"></div>
<div style="left:720px;top:534px;width:1px;height:31px;background:#e2e2e2"></div>
<div style="left:720px;top:565px;width:1px;height:397px;background:#a0a0a0"></div>
<div style="left:820px;top:534px;width:1px;height:31px;background:#e2e2e2"></div>
<div style="left:820px;top:565px;width:1px;height:397px;background:#a0a0a0"></div>
<div style="left:980px;top:534px;width:1px;height:31px;background:#e2e2e2"></div>
<div style="left:980px;top:565px;width:1px;height:397px;background:#a0a0a0"></div>
<div style="left:1080px;top:534px;width:1px;height:31px;background:#e2e2e2"></div>
<div style="left:1080px;top:565px;width:1px;height:397px;background:#a0a0a0"></div>
<div style="left:378px;top:534px;width:3px;height:428px;background:#a0a0a0"></div>
<div style="left:638px;top:534px;width:3px;height:428px;background:#a0a0a0"></div>
<div style="left:898px;top:534px;width:3px;height:428px;background:#a0a0a0"></div>
<div style="left:10px;top:565px;width:1133px;height:1px;background:#a0a0a0"></div>
<div style="left:10px;top:588px;width:1133px;height:1px;background:#a0a0a0"></div>
<div style="left:10px;top:611px;width:1133px;height:1px;background:#a0a0a0"></div>
<div style="left:10px;top:634px;width:1133px;height:1px;background:#a0a0a0"></div>
<div style="left:10px;top:657px;width:1133px;height:1px;background:#a0a0a0"></div>
<div style="left:10px;top:680px;width:1133px;height:1px;background:#a0a0a0"></div>
<div style="left:10px;top:703px;width:1133px;height:1px;background:#a0a0a0"></div>
<div style="left:10px;top:726px;width:1133px;height:1px;background:#a0a0a0"></div>
<div style="left:10px;top:749px;width:1133px;height:1px;background:#a0a0a0"></div>
<div style="left:10px;top:772px;width:1133px;height:1px;background:#a0a0a0"></div>
<div style="left:10px;top:795px;width:1133px;height:1px;background:#a0a0a0"></div>
<div style="left:10px;top:818px;width:1133px;height:1px;background:#a0a0a0"></div>
<div style="left:10px;top:841px;width:1133px;height:1px;background:#a0a0a0"></div>
<div style="left:10px;top:864px;width:1133px;height:1px;background:#a0a0a0"></div>
<div style="left:10px;top:887px;width:1133px;height:1px;background:#a0a0a0"></div>
<div style="left:10px;top:910px;width:1133px;height:1px;background:#a0a0a0"></div>
<div style="left:10px;top:933px;width:1133px;height:1px;background:#a0a0a0"></div>
<div style="left:10px;top:956px;width:1133px;height:1px;background:#a0a0a0"></div>
<div class="t th" style="left:18px;top:542.5px;line-height:14px;">Index</div>
<div class="t th" style="left:68px;top:542.5px;line-height:14px;">Asset 1</div>
<div class="t th" style="left:148px;top:542.5px;line-height:14px;">Asset 2</div>
<div class="t th" style="left:228px;top:542.5px;line-height:14px;">Correlation</div>
<div class="t th" style="left:308px;top:542.5px;line-height:14px;">Spread</div>
<div class="t th" style="left:388px;top:542.5px;line-height:14px;">Asset 1</div>
<div class="t th" style="left:467px;top:537.5px;line-height:12px;">Lot Multplier</div>
<div class="t th" style="left:467px;top:549.0px;line-height:12px;">1</div>
<div class="t th" style="left:568px;top:542.5px;line-height:14px;">Signal 1</div>
<div class="t th" style="left:648px;top:542.5px;line-height:14px;">Asset 2</div>
<div class="t th" style="left:727px;top:537.5px;line-height:12px;">Lot</div>
<div class="t th" style="left:727px;top:549.0px;line-height:12px;">Mulitplier 2</div>
<div class="t th" style="left:828px;top:542.5px;line-height:14px;">Signal 2</div>
<div class="t th" style="left:907px;top:537.5px;line-height:12px;">Spread</div>
<div class="t th" style="left:907px;top:549.0px;line-height:12px;">Strength</div>
<div class="t th" style="left:987px;top:537.5px;line-height:12px;">Absolute</div>
<div class="t th" style="left:987px;top:549.0px;line-height:12px;">Value</div>
<svg style="position:absolute;left:967px;top:548px" width="11" height="5" viewBox="0 0 11 5"><path d="M0.5 0 H10.5 L5.5 5 Z" fill="#a8a8a8"/></svg>
<div class="t td num" style="left:13px;top:569.2px;line-height:14px">99</div>
<div class="t td cap" style="left:64px;top:569.2px;line-height:14px;">GBPJPY</div>
<div class="t td cap" style="left:144px;top:569.2px;line-height:14px;">GBPAUD</div>
<div class="t td num" style="left:224px;top:569.2px;line-height:14px">0<span class="cm">,</span>740</div>
<div class="t td num" style="left:304px;top:569.2px;line-height:14px">2<span class="cm">,</span>699</div>
<div class="t td cap" style="left:384px;top:569.2px;line-height:14px;">GBPJPY</div>
<div class="t td num" style="left:464px;top:569.2px;line-height:14px">1<span class="cm">,</span>000</div>
<div class="t td" style="left:564px;top:569.2px;line-height:14px;">Sell</div>
<div class="t td cap" style="left:644px;top:569.2px;line-height:14px;">GBPAUD</div>
<div class="t td num" style="left:724px;top:569.2px;line-height:14px">0<span class="cm">,</span>936</div>
<div class="t td" style="left:824px;top:569.2px;line-height:14px;">Buy</div>
<div class="t td" style="left:904px;top:569.2px;line-height:14px;">Weak</div>
<div class="t td num" style="left:984px;top:569.2px;line-height:14px">2<span class="cm">,</span>699</div>
<div class="t td num" style="left:13px;top:592.2px;line-height:14px">62</div>
<div class="t td cap" style="left:64px;top:592.2px;line-height:14px;">EURJPY</div>
<div class="t td cap" style="left:144px;top:592.2px;line-height:14px;">EURNZD</div>
<div class="t td num" style="left:224px;top:592.2px;line-height:14px">0<span class="cm">,</span>699</div>
<div class="t td num" style="left:304px;top:592.2px;line-height:14px">2<span class="cm">,</span>435</div>
<div class="t td cap" style="left:384px;top:592.2px;line-height:14px;">EURJPY</div>
<div class="t td num" style="left:464px;top:592.2px;line-height:14px">1<span class="cm">,</span>000</div>
<div class="t td" style="left:564px;top:592.2px;line-height:14px;">Sell</div>
<div class="t td cap" style="left:644px;top:592.2px;line-height:14px;">EURNZD</div>
<div class="t td num" style="left:724px;top:592.2px;line-height:14px">1<span class="cm">,</span>024</div>
<div class="t td" style="left:824px;top:592.2px;line-height:14px;">Buy</div>
<div class="t td" style="left:904px;top:592.2px;line-height:14px;">Weak</div>
<div class="t td num" style="left:984px;top:592.2px;line-height:14px">2<span class="cm">,</span>435</div>
<div class="t td num" style="left:13px;top:615.2px;line-height:14px">63</div>
<div class="t td cap" style="left:64px;top:615.2px;line-height:14px;">EURJPY</div>
<div class="t td cap" style="left:144px;top:615.2px;line-height:14px;">EURCAD</div>
<div class="t td num" style="left:224px;top:615.2px;line-height:14px">0<span class="cm">,</span>793</div>
<div class="t td num" style="left:304px;top:615.2px;line-height:14px">2<span class="cm">,</span>087</div>
<div class="t td cap" style="left:384px;top:615.2px;line-height:14px;">EURJPY</div>
<div class="t td num" style="left:464px;top:615.2px;line-height:14px">1<span class="cm">,</span>000</div>
<div class="t td" style="left:564px;top:615.2px;line-height:14px;">Sell</div>
<div class="t td cap" style="left:644px;top:615.2px;line-height:14px;">EURCAD</div>
<div class="t td num" style="left:724px;top:615.2px;line-height:14px">0<span class="cm">,</span>853</div>
<div class="t td" style="left:824px;top:615.2px;line-height:14px;">Buy</div>
<div class="t td" style="left:904px;top:615.2px;line-height:14px;">Weak</div>
<div class="t td num" style="left:984px;top:615.2px;line-height:14px">2<span class="cm">,</span>087</div>
<div class="t td num" style="left:13px;top:638.2px;line-height:14px">122</div>
<div class="t td cap" style="left:64px;top:638.2px;line-height:14px;">AUDJPY</div>
<div class="t td cap" style="left:144px;top:638.2px;line-height:14px;">US30</div>
<div class="t td num" style="left:224px;top:638.2px;line-height:14px">0<span class="cm">,</span>805</div>
<div class="t td num" style="left:304px;top:638.2px;line-height:14px">2<span class="cm">,</span>186</div>
<div class="t td cap" style="left:384px;top:638.2px;line-height:14px;">AUDJPY</div>
<div class="t td num" style="left:464px;top:638.2px;line-height:14px">1<span class="cm">,</span>000</div>
<div class="t td" style="left:564px;top:638.2px;line-height:14px;">Sell</div>
<div class="t td cap" style="left:644px;top:638.2px;line-height:14px;">US30</div>
<div class="t td num" style="left:724px;top:638.2px;line-height:14px">0<span class="cm">,</span>623</div>
<div class="t td" style="left:824px;top:638.2px;line-height:14px;">Buy</div>
<div class="t td" style="left:904px;top:638.2px;line-height:14px;">Weak</div>
<div class="t td num" style="left:984px;top:638.2px;line-height:14px">2<span class="cm">,</span>186</div>
<div class="t td num" style="left:13px;top:661.2px;line-height:14px">117</div>
<div class="t td cap" style="left:64px;top:661.2px;line-height:14px;">AUDJPY</div>
<div class="t td cap" style="left:144px;top:661.2px;line-height:14px;">BTCUSD</div>
<div class="t td num" style="left:224px;top:661.2px;line-height:14px">0<span class="cm">,</span>817</div>
<div class="t td num" style="left:304px;top:661.2px;line-height:14px">2<span class="cm">,</span>468</div>
<div class="t td cap" style="left:384px;top:661.2px;line-height:14px;">AUDJPY</div>
<div class="t td num" style="left:464px;top:661.2px;line-height:14px">1<span class="cm">,</span>000</div>
<div class="t td" style="left:564px;top:661.2px;line-height:14px;">Sell</div>
<div class="t td cap" style="left:644px;top:661.2px;line-height:14px;">BTCUSD</div>
<div class="t td num" style="left:724px;top:661.2px;line-height:14px">6<span class="cm">,</span>232</div>
<div class="t td" style="left:824px;top:661.2px;line-height:14px;">Buy</div>
<div class="t td" style="left:904px;top:661.2px;line-height:14px;">Weak</div>
<div class="t td num" style="left:984px;top:661.2px;line-height:14px">2<span class="cm">,</span>468</div>
<div class="t td num" style="left:13px;top:684.2px;line-height:14px">160</div>
<div class="t td cap" style="left:64px;top:684.2px;line-height:14px;">ETHUSD</div>
<div class="t td cap" style="left:144px;top:684.2px;line-height:14px;">LTCUSD</div>
<div class="t td num" style="left:224px;top:684.2px;line-height:14px">0<span class="cm">,</span>841</div>
<div class="t td num" style="left:304px;top:684.2px;line-height:14px">2<span class="cm">,</span>000</div>
<div class="t td cap" style="left:384px;top:684.2px;line-height:14px;">ETHUSD</div>
<div class="t td num" style="left:464px;top:684.2px;line-height:14px">1<span class="cm">,</span>000</div>
<div class="t td" style="left:564px;top:684.2px;line-height:14px;">Sell</div>
<div class="t td cap" style="left:644px;top:684.2px;line-height:14px;">LTCUSD</div>
<div class="t td num" style="left:724px;top:684.2px;line-height:14px">1<span class="cm">,</span>000</div>
<div class="t td" style="left:824px;top:684.2px;line-height:14px;">Buy</div>
<div class="t td" style="left:904px;top:684.2px;line-height:14px;">Weak</div>
<div class="t td num" style="left:984px;top:684.2px;line-height:14px">2<span class="cm">,</span>000</div>
<div class="t td num" style="left:13px;top:707.2px;line-height:14px">195</div>
<div class="t td cap" style="left:64px;top:707.2px;line-height:14px;">SPX500</div>
<div class="t td cap" style="left:144px;top:707.2px;line-height:14px;">US30</div>
<div class="t td num" style="left:224px;top:707.2px;line-height:14px">0<span class="cm">,</span>969</div>
<div class="t td num" style="left:304px;top:707.2px;line-height:14px">2<span class="cm">,</span>583</div>
<div class="t td cap" style="left:384px;top:707.2px;line-height:14px;">SPX500</div>
<div class="t td num" style="left:464px;top:707.2px;line-height:14px">1<span class="cm">,</span>000</div>
<div class="t td" style="left:564px;top:707.2px;line-height:14px;">Sell</div>
<div class="t td cap" style="left:644px;top:707.2px;line-height:14px;">US30</div>
<div class="t td num" style="left:724px;top:707.2px;line-height:14px">1<span class="cm">,</span>000</div>
<div class="t td" style="left:824px;top:707.2px;line-height:14px;">Buy</div>
<div class="t td" style="left:904px;top:707.2px;line-height:14px;">Weak</div>
<div class="t td num" style="left:984px;top:707.2px;line-height:14px">2<span class="cm">,</span>583</div>
<div class="t td num" style="left:13px;top:730.2px;line-height:14px">48</div>
<div class="t td cap" style="left:64px;top:730.2px;line-height:14px;">EURAUD</div>
<div class="t td cap" style="left:144px;top:730.2px;line-height:14px;">GBPCAD</div>
<div class="t td num" style="left:224px;top:730.2px;line-height:14px">0<span class="cm">,</span>753</div>
<div class="t td num" style="left:304px;top:730.2px;line-height:14px"><span class="mn">-</span>2<span class="cm">,</span>195</div>
<div class="t td cap" style="left:384px;top:730.2px;line-height:14px;">EURAUD</div>
<div class="t td num" style="left:464px;top:730.2px;line-height:14px">1<span class="cm">,</span>000</div>
<div class="t td" style="left:564px;top:730.2px;line-height:14px;">Buy</div>
<div class="t td cap" style="left:644px;top:730.2px;line-height:14px;">GBPCAD</div>
<div class="t td num" style="left:724px;top:730.2px;line-height:14px">0<span class="cm">,</span>912</div>
<div class="t td" style="left:824px;top:730.2px;line-height:14px;">Sell</div>
<div class="t td" style="left:904px;top:730.2px;line-height:14px;">Weak</div>
<div class="t td num" style="left:984px;top:730.2px;line-height:14px">2<span class="cm">,</span>195</div>
<div class="t td num" style="left:13px;top:753.2px;line-height:14px">94</div>
<div class="t td cap" style="left:64px;top:753.2px;line-height:14px;">GBPJPY</div>
<div class="t td cap" style="left:144px;top:753.2px;line-height:14px;">EURCAD</div>
<div class="t td num" style="left:224px;top:753.2px;line-height:14px">0<span class="cm">,</span>732</div>
<div class="t td num" style="left:304px;top:753.2px;line-height:14px">2<span class="cm">,</span>162</div>
<div class="t td cap" style="left:384px;top:753.2px;line-height:14px;">GBPJPY</div>
<div class="t td num" style="left:464px;top:753.2px;line-height:14px">1<span class="cm">,</span>000</div>
<div class="t td" style="left:564px;top:753.2px;line-height:14px;">Sell</div>
<div class="t td cap" style="left:644px;top:753.2px;line-height:14px;">EURCAD</div>
<div class="t td num" style="left:724px;top:753.2px;line-height:14px">0<span class="cm">,</span>853</div>
<div class="t td" style="left:824px;top:753.2px;line-height:14px;">Buy</div>
<div class="t td" style="left:904px;top:753.2px;line-height:14px;">Weak</div>
<div class="t td num" style="left:984px;top:753.2px;line-height:14px">2<span class="cm">,</span>162</div>
<div class="t td num" style="left:13px;top:776.2px;line-height:14px">43</div>
<div class="t td cap" style="left:64px;top:776.2px;line-height:14px;">EURAUD</div>
<div class="t td cap" style="left:144px;top:776.2px;line-height:14px;">EURJPY</div>
<div class="t td num" style="left:224px;top:776.2px;line-height:14px">0<span class="cm">,</span>690</div>
<div class="t td num" style="left:304px;top:776.2px;line-height:14px"><span class="mn">-</span>2<span class="cm">,</span>828</div>
<div class="t td cap" style="left:384px;top:776.2px;line-height:14px;">EURAUD</div>
<div class="t td num" style="left:464px;top:776.2px;line-height:14px">1<span class="cm">,</span>000</div>
<div class="t td" style="left:564px;top:776.2px;line-height:14px;">Buy</div>
<div class="t td cap" style="left:644px;top:776.2px;line-height:14px;">EURJPY</div>
<div class="t td num" style="left:724px;top:776.2px;line-height:14px">1<span class="cm">,</span>069</div>
<div class="t td" style="left:824px;top:776.2px;line-height:14px;">Sell</div>
<div class="t td" style="left:904px;top:776.2px;line-height:14px;">Weak</div>
<div class="t td num" style="left:984px;top:776.2px;line-height:14px">2<span class="cm">,</span>828</div>
<div class="t td num" style="left:13px;top:799.2px;line-height:14px">119</div>
<div class="t td cap" style="left:64px;top:799.2px;line-height:14px;">AUDJPY</div>
<div class="t td cap" style="left:144px;top:799.2px;line-height:14px;">JPN225</div>
<div class="t td num" style="left:224px;top:799.2px;line-height:14px">0<span class="cm">,</span>834</div>
<div class="t td num" style="left:304px;top:799.2px;line-height:14px">2<span class="cm">,</span>143</div>
<div class="t td cap" style="left:384px;top:799.2px;line-height:14px;">AUDJPY</div>
<div class="t td num" style="left:464px;top:799.2px;line-height:14px">1<span class="cm">,</span>000</div>
<div class="t td" style="left:564px;top:799.2px;line-height:14px;">Sell</div>
<div class="t td cap" style="left:644px;top:799.2px;line-height:14px;">JPN225</div>
<div class="t td num" style="left:724px;top:799.2px;line-height:14px">10<span class="cm">,</span>000</div>
<div class="t td" style="left:824px;top:799.2px;line-height:14px;">Buy</div>
<div class="t td" style="left:904px;top:799.2px;line-height:14px;">Weak</div>
<div class="t td num" style="left:984px;top:799.2px;line-height:14px">2<span class="cm">,</span>143</div>
<div class="t td num" style="left:13px;top:822.2px;line-height:14px">101</div>
<div class="t td cap" style="left:64px;top:822.2px;line-height:14px;">GBPJPY</div>
<div class="t td cap" style="left:144px;top:822.2px;line-height:14px;">GBPNZD</div>
<div class="t td num" style="left:224px;top:822.2px;line-height:14px">0<span class="cm">,</span>760</div>
<div class="t td num" style="left:304px;top:822.2px;line-height:14px">2<span class="cm">,</span>151</div>
<div class="t td cap" style="left:384px;top:822.2px;line-height:14px;">GBPJPY</div>
<div class="t td num" style="left:464px;top:822.2px;line-height:14px">1<span class="cm">,</span>000</div>
<div class="t td" style="left:564px;top:822.2px;line-height:14px;">Sell</div>
<div class="t td cap" style="left:644px;top:822.2px;line-height:14px;">GBPNZD</div>
<div class="t td num" style="left:724px;top:822.2px;line-height:14px">1<span class="cm">,</span>024</div>
<div class="t td" style="left:824px;top:822.2px;line-height:14px;">Buy</div>
<div class="t td" style="left:904px;top:822.2px;line-height:14px;">Weak</div>
<div class="t td num" style="left:984px;top:822.2px;line-height:14px">2<span class="cm">,</span>151</div>
<div class="t td num" style="left:13px;top:845.2px;line-height:14px">107</div>
<div class="t td cap" style="left:64px;top:845.2px;line-height:14px;">AUDCAD</div>
<div class="t td cap" style="left:144px;top:845.2px;line-height:14px;">NZDUSD</div>
<div class="t td num" style="left:224px;top:845.2px;line-height:14px">0<span class="cm">,</span>675</div>
<div class="t td num" style="left:304px;top:845.2px;line-height:14px">2<span class="cm">,</span>182</div>
<div class="t td cap" style="left:384px;top:845.2px;line-height:14px;">AUDCAD</div>
<div class="t td num" style="left:464px;top:845.2px;line-height:14px">1<span class="cm">,</span>000</div>
<div class="t td" style="left:564px;top:845.2px;line-height:14px;">Sell</div>
<div class="t td cap" style="left:644px;top:845.2px;line-height:14px;">NZDUSD</div>
<div class="t td num" style="left:724px;top:845.2px;line-height:14px">0<span class="cm">,</span>731</div>
<div class="t td" style="left:824px;top:845.2px;line-height:14px;">Buy</div>
<div class="t td" style="left:904px;top:845.2px;line-height:14px;">Weak</div>
<div class="t td num" style="left:984px;top:845.2px;line-height:14px">2<span class="cm">,</span>182</div>
<div class="t td num" style="left:13px;top:868.2px;line-height:14px">44</div>
<div class="t td cap" style="left:64px;top:868.2px;line-height:14px;">EURAUD</div>
<div class="t td cap" style="left:144px;top:868.2px;line-height:14px;">CHFJPY</div>
<div class="t td num" style="left:224px;top:868.2px;line-height:14px">0<span class="cm">,</span>792</div>
<div class="t td num" style="left:304px;top:868.2px;line-height:14px"><span class="mn">-</span>2<span class="cm">,</span>964</div>
<div class="t td cap" style="left:384px;top:868.2px;line-height:14px;">EURAUD</div>
<div class="t td num" style="left:464px;top:868.2px;line-height:14px">1<span class="cm">,</span>000</div>
<div class="t td" style="left:564px;top:868.2px;line-height:14px;">Buy</div>
<div class="t td cap" style="left:644px;top:868.2px;line-height:14px;">CHFJPY</div>
<div class="t td num" style="left:724px;top:868.2px;line-height:14px">1<span class="cm">,</span>069</div>
<div class="t td" style="left:824px;top:868.2px;line-height:14px;">Sell</div>
<div class="t td" style="left:904px;top:868.2px;line-height:14px;">Weak</div>
<div class="t td num" style="left:984px;top:868.2px;line-height:14px">2<span class="cm">,</span>964</div>
<div class="t td num" style="left:13px;top:891.2px;line-height:14px">67</div>
<div class="t td cap" style="left:64px;top:891.2px;line-height:14px;">EURJPY</div>
<div class="t td cap" style="left:144px;top:891.2px;line-height:14px;">GBPAUD</div>
<div class="t td num" style="left:224px;top:891.2px;line-height:14px">0<span class="cm">,</span>772</div>
<div class="t td num" style="left:304px;top:891.2px;line-height:14px">2<span class="cm">,</span>527</div>
<div class="t td cap" style="left:384px;top:891.2px;line-height:14px;">EURJPY</div>
<div class="t td num" style="left:464px;top:891.2px;line-height:14px">1<span class="cm">,</span>000</div>
<div class="t td" style="left:564px;top:891.2px;line-height:14px;">Sell</div>
<div class="t td cap" style="left:644px;top:891.2px;line-height:14px;">GBPAUD</div>
<div class="t td num" style="left:724px;top:891.2px;line-height:14px">0<span class="cm">,</span>936</div>
<div class="t td" style="left:824px;top:891.2px;line-height:14px;">Buy</div>
<div class="t td" style="left:904px;top:891.2px;line-height:14px;">Weak</div>
<div class="t td num" style="left:984px;top:891.2px;line-height:14px">2<span class="cm">,</span>527</div>
<div class="t td num" style="left:13px;top:914.2px;line-height:14px">129</div>
<div class="t td cap" style="left:64px;top:914.2px;line-height:14px;">CHFJPY</div>
<div class="t td cap" style="left:144px;top:914.2px;line-height:14px;">GBPAUD</div>
<div class="t td num" style="left:224px;top:914.2px;line-height:14px">0<span class="cm">,</span>850</div>
<div class="t td num" style="left:304px;top:914.2px;line-height:14px">2<span class="cm">,</span>545</div>
<div class="t td cap" style="left:384px;top:914.2px;line-height:14px;">CHFJPY</div>
<div class="t td num" style="left:464px;top:914.2px;line-height:14px">1<span class="cm">,</span>000</div>
<div class="t td" style="left:564px;top:914.2px;line-height:14px;">Sell</div>
<div class="t td cap" style="left:644px;top:914.2px;line-height:14px;">GBPAUD</div>
<div class="t td num" style="left:724px;top:914.2px;line-height:14px">0<span class="cm">,</span>936</div>
<div class="t td" style="left:824px;top:914.2px;line-height:14px;">Buy</div>
<div class="t td" style="left:904px;top:914.2px;line-height:14px;">Weak</div>
<div class="t td num" style="left:984px;top:914.2px;line-height:14px">2<span class="cm">,</span>545</div>
<div class="t td num" style="left:13px;top:937.2px;line-height:14px">125</div>
<div class="t td cap" style="left:64px;top:937.2px;line-height:14px;">CHFJPY</div>
<div class="t td cap" style="left:144px;top:937.2px;line-height:14px;">EURNZD</div>
<div class="t td num" style="left:224px;top:937.2px;line-height:14px">0<span class="cm">,</span>749</div>
<div class="t td num" style="left:304px;top:937.2px;line-height:14px">2<span class="cm">,</span>225</div>
<div class="t td cap" style="left:384px;top:937.2px;line-height:14px;">CHFJPY</div>
<div class="t td num" style="left:464px;top:937.2px;line-height:14px">1<span class="cm">,</span>000</div>
<div class="t td" style="left:564px;top:937.2px;line-height:14px;">Sell</div>
<div class="t td cap" style="left:644px;top:937.2px;line-height:14px;">EURNZD</div>
<div class="t td num" style="left:724px;top:937.2px;line-height:14px">1<span class="cm">,</span>024</div>
<div class="t td" style="left:824px;top:937.2px;line-height:14px;">Buy</div>
<div class="t td" style="left:904px;top:937.2px;line-height:14px;">Weak</div>
<div class="t td num" style="left:984px;top:937.2px;line-height:14px">2<span class="cm">,</span>225</div>
<div style="left:1144px;top:535px;width:15px;height:427px;background:#f0f0f0"></div>
<svg style="position:absolute;left:1147px;top:540px" width="9" height="8" viewBox="0 0 9 8"><path d="M1.1 6.6 L4.5 3.1 L7.9 6.6" fill="none" stroke="#555" stroke-width="2.1"/></svg>
<div style="left:1144px;top:551px;width:15px;height:39px;background:#cdcdcd"></div>
</body></html>
